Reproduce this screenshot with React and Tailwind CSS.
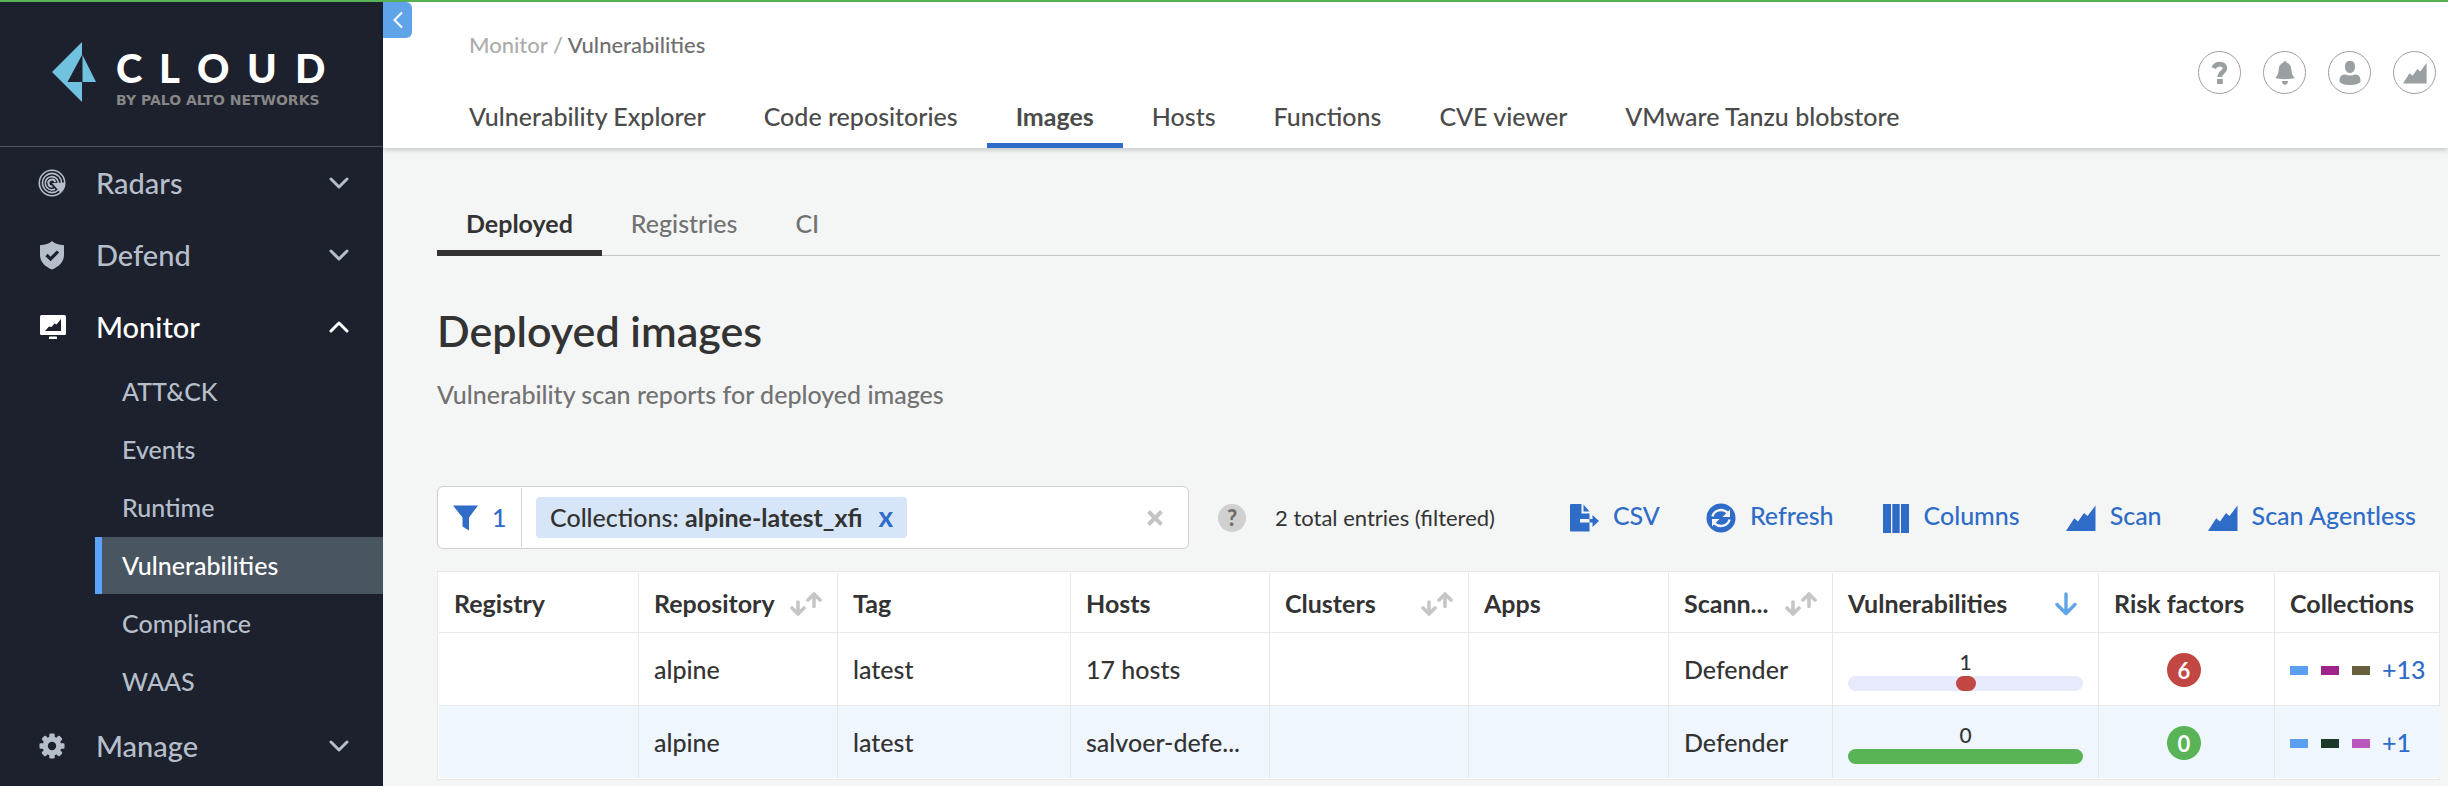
import React from "react";

function Chevron({ up = false }) {
  return (
    <svg width="20" height="14" viewBox="0 0 20 14" fill="none" stroke="currentColor" strokeWidth="3" strokeLinecap="round" strokeLinejoin="round" aria-hidden="true">
      <path d={up ? "M2 11 L10 3 L18 11" : "M2 3 L10 11 L18 3"} />
    </svg>
  );
}

function RadarIcon() {
  return (
    <svg width="28" height="28" viewBox="0 0 28 28" fill="none" stroke="currentColor" strokeWidth="1.6" aria-hidden="true">
      <circle cx="14" cy="14" r="12.7" />
      <circle cx="14" cy="14" r="9.6" />
      <path d="M20.4 14.5 A6.6 6.6 0 1 0 17 20" />
      <path d="M17.2 13 A3.5 3.5 0 1 0 14.5 17.5" strokeWidth="2" />
      <path d="M14 14 L27 13.4 A13 13 0 0 1 22.5 23.8 Z" fill="currentColor" stroke="none" />
    </svg>
  );
}

function ShieldIcon() {
  return (
    <svg width="28" height="30" viewBox="0 0 28 30" aria-hidden="true">
      <path d="M14 1 C16.5 3.4 21 5 26 5.2 V15 C26 22 20.5 27 14 29.4 C7.5 27 2 22 2 15 V5.2 C7 5 11.5 3.4 14 1 Z" fill="currentColor" />
      <path d="M8.5 15 L12.6 19 L20 11.5" fill="none" stroke="#1c212d" strokeWidth="3.2" />
    </svg>
  );
}

function MonitorIcon() {
  return (
    <svg width="28" height="28" viewBox="0 0 28 28" aria-hidden="true">
      <rect x="2" y="2" width="26" height="20" rx="1.5" fill="currentColor" />
      <path d="M7 18 L11 13.5 L13.5 14 L16.5 10.5 L18.5 11.5 L23 6 V18 Z" fill="#1c212d" />
      <rect x="11" y="23.5" width="8" height="2.5" rx="0.5" fill="currentColor" />
    </svg>
  );
}

function GearIcon() {
  return (
    <svg width="28" height="28" viewBox="0 0 28 28" fill="currentColor" aria-hidden="true">
      {[0, 45, 90, 135].map((a) => (
        <rect key={a} x="11.3" y="1.5" width="5.4" height="25" rx="1.2" transform={`rotate(${a} 14 14)`} />
      ))}
      <circle cx="14" cy="14" r="9.4" />
      <circle cx="14" cy="14" r="4.2" fill="#1c212d" />
    </svg>
  );
}

function ScanIcon({ size = 30 }) {
  return (
    <svg width={size} height={size} viewBox="0 0 30 30" fill="currentColor" aria-hidden="true">
      <path d="M0 28 L8.2 15.2 L12 18.5 L18 10 L21.5 13 L29.5 2.5 V28 Z" />
    </svg>
  );
}

function CsvIcon() {
  return (
    <svg width="30" height="30" viewBox="0 0 30 30" fill="currentColor" aria-hidden="true">
      <path d="M2 1 H12.5 V10.5 H20.5 V16 H11 V19.5 H20.5 V28.5 H2 Q1 28.5 1 27.5 V2 Q1 1 2 1 Z" />
      <path d="M14.5 1.5 L20.5 8.5 H14.5 Z" />
      <path d="M20.5 16 H23.5 V12 L30 18 L23.5 24 V19.5 H20.5 Z" />
    </svg>
  );
}

function RefreshIcon() {
  return (
    <svg width="30" height="30" viewBox="0 0 30 30" aria-hidden="true">
      <circle cx="15" cy="15" r="14.5" fill="currentColor" />
      <g fill="none" stroke="#f4f6f5" strokeWidth="2.4">
        <path d="M6.5 13.5 C8 7 16 5 21.5 9.5" />
        <path d="M23.5 16.5 C22 23 14 25 8.5 20.5" />
      </g>
      <path d="M24 6.5 V14 H16.5 Z M6 23.5 V16 H13.5 Z" fill="#f4f6f5" />
    </svg>
  );
}

function ColumnsIcon() {
  return (
    <svg width="30" height="30" viewBox="0 0 30 30" fill="currentColor" aria-hidden="true">
      <rect x="3" y="1" width="8" height="29" />
      <rect x="12.3" y="1" width="7.4" height="29" />
      <rect x="21" y="1" width="8" height="29" />
    </svg>
  );
}

function SortIcon() {
  return (
    <svg width="32" height="24" viewBox="0 0 32 24" fill="none" stroke="#c6c6c6" strokeWidth="3.6" strokeLinecap="round" strokeLinejoin="round" aria-hidden="true">
      <path d="M8 10 V21 M2 16 L8 22 L14 16" />
      <path d="M24 14.5 V3 M18 8 L24 2 L30 8" />
    </svg>
  );
}

function SortedIcon() {
  return (
    <svg width="22" height="24" viewBox="0 0 22 24" fill="none" stroke="#5fa3e8" strokeWidth="3.4" strokeLinecap="round" strokeLinejoin="round" aria-hidden="true">
      <path d="M11 2 V21 M2 12.5 L11 21.5 L20 12.5" />
    </svg>
  );
}

const sections = [
  { label: "Radars", icon: <RadarIcon /> },
  { label: "Defend", icon: <ShieldIcon /> },
  {
    label: "Monitor",
    icon: <MonitorIcon />,
    open: true,
    items: ["ATT&CK", "Events", "Runtime", "Vulnerabilities", "Compliance", "WAAS"],
  },
  { label: "Manage", icon: <GearIcon /> },
];

function Logo() {
  return (
    <svg width="290" height="72" viewBox="0 0 290 72" role="img" aria-label="Cloud by Palo Alto Networks">
      <path d="M30 0 V13 L15.5 40 H30 V60 L0 30 Z" fill="#70c2de" />
      <path d="M30.5 13 L44 40 H30.5 Z" fill="#70c2de" />
      <text x="64 107 145 195 243" y="41" fill="#ffffff" fontSize="40" fontWeight="900" fontFamily="Lato, sans-serif">CLOUD</text>
      <text x="64" y="63" fill="#868686" fontSize="14" fontWeight="700" fontFamily="'DejaVu Sans', sans-serif">BY PALO ALTO NETWORKS</text>
    </svg>
  );
}

function Sidebar() {
  return (
    <aside className="w-[383px] shrink-0 bg-[#1c212d] text-[#b6becb]">
      <div className="h-[145px] border-b border-[#50545f] pl-[52px] pt-10">
        <Logo />
      </div>
      <nav aria-label="Main">
        {sections.map((s) => (
          <div key={s.label}>
            <button
              type="button"
              aria-expanded={!!s.open}
              className={`flex h-[72px] w-full items-center pl-[38px] pr-[34px] text-left text-[29px] ${s.open ? "text-white" : ""}`}
            >
              <span className="flex w-[58px]">{s.icon}</span>
              <span className="flex-1">{s.label}</span>
              <Chevron up={s.open} />
            </button>
            {s.items && (
              <ul className="flex flex-col gap-px pl-[95px]">
                {s.items.map((i) => (
                  <li key={i}>
                    <a
                      href="#"
                      className={`flex h-[57px] items-center border-l-[7px] pl-5 text-[25px] ${
                        i === "Vulnerabilities" ? "border-[#5ba3fb] bg-[#4a5562] text-white" : "border-transparent"
                      }`}
                    >
                      {i}
                    </a>
                  </li>
                ))}
              </ul>
            )}
          </div>
        ))}
      </nav>
    </aside>
  );
}

const tabs = ["Vulnerability Explorer", "Code repositories", "Images", "Hosts", "Functions", "CVE viewer", "VMware Tanzu blobstore"];

function RoundButton({ label, children }) {
  return (
    <button type="button" aria-label={label} className="flex size-[43px] items-center justify-center rounded-full border border-[#9aa0a3] text-[#9a9fa2]">
      {children}
    </button>
  );
}

function Header() {
  return (
    <header className="relative z-10 flex h-[146px] items-start justify-between bg-white shadow-[0_2px_5px_rgba(0,0,0,0.2)]">
      <button type="button" aria-label="Collapse menu" className="absolute left-0 top-0 flex h-9 w-[29px] items-center justify-center rounded-r-md bg-[#5fa3e8]">
        <svg width="10" height="18" viewBox="0 0 10 18" fill="none" stroke="#ffffff" strokeWidth="2" aria-hidden="true">
          <path d="M9 1.5 L1.5 9 L9 16.5" />
        </svg>
      </button>
      <div className="flex h-full flex-col justify-between pl-[57px] pt-[29px]">
        <p className="pl-[29px] text-[22px] leading-7 text-[#6f6f6f]">
          <a href="#" className="text-[#acacac]">Monitor</a>
          <span className="text-[#acacac]"> / </span>
          Vulnerabilities
        </p>
        <nav aria-label="Sections" className="flex text-[25px] leading-8 text-[#4b4b4b]">
          {tabs.map((t) => (
            <a
              key={t}
              href="#"
              className={`border-b-[5px] px-[29px] pb-[11px] ${t === "Images" ? "border-[#2f6cc8] font-bold" : "border-transparent"}`}
            >
              {t}
            </a>
          ))}
        </nav>
      </div>
      <div className="flex gap-[22px] pr-3 pt-[49px]">
        <RoundButton label="Help">
          <svg width="18" height="24" viewBox="0 0 18 24" aria-hidden="true">
            <path d="M2.5 7 C5 1.8 14 1.8 14 7.2 C14 11 8.8 11 8.8 16" fill="none" stroke="currentColor" strokeWidth="4.6" />
            <rect x="6" y="18" width="5.8" height="5" fill="currentColor" />
          </svg>
        </RoundButton>
        <RoundButton label="Notifications">
          <svg width="20" height="24" viewBox="0 0 20 24" fill="currentColor" aria-hidden="true">
            <path d="M10 0 C11 0 11.6 0.8 11.7 1.8 C15 2.8 16.2 5.5 16.4 9 C16.6 12.5 17.5 14.5 19.8 17 C14 18.5 6 18.5 0.2 17 C2.5 14.5 3.4 12.5 3.6 9 C3.8 5.5 5 2.8 8.3 1.8 C8.4 0.8 9 0 10 0 Z" />
            <path d="M7 20 H13 C13 22.3 11.8 23.8 10 23.8 C8.2 23.8 7 22.3 7 20 Z" />
          </svg>
        </RoundButton>
        <RoundButton label="Account">
          <svg width="22" height="24" viewBox="0 0 22 24" fill="currentColor" aria-hidden="true">
            <path d="M11 0 C14.5 0 16 2 16 5.5 C16 9.5 14 12 11 12 C8 12 6 9.5 6 5.5 C6 2 7.5 0 11 0 Z" />
            <path d="M6 13.5 C9 14.8 13 14.8 16 13.5 C20 13.5 21.5 16 21.5 20 C21.5 22.5 16 24 11 24 C6 24 0.5 22.5 0.5 20 C0.5 16 2 13.5 6 13.5 Z" />
          </svg>
        </RoundButton>
        <RoundButton label="Reports">
          <ScanIcon size={24} />
        </RoundButton>
      </div>
    </header>
  );
}

const actions = [
  { label: "CSV", icon: <CsvIcon /> },
  { label: "Refresh", icon: <RefreshIcon /> },
  { label: "Columns", icon: <ColumnsIcon /> },
  { label: "Scan", icon: <ScanIcon /> },
  { label: "Scan Agentless", icon: <ScanIcon /> },
];

function Toolbar() {
  return (
    <div className="flex items-center">
      <div className="flex h-[63px] max-w-[752px] flex-1 items-center rounded-md border border-[#cfcfcf] bg-white">
        <button type="button" aria-label="Filters, 1 active" className="flex h-[59px] w-[84px] items-center gap-[14px] border-r border-[#d4d4d4] pl-[15px] text-[25px] text-[#2f6cc8]">
          <svg width="25" height="26" viewBox="0 0 25 26" fill="currentColor" aria-hidden="true">
            <path d="M0 0.5 H25 L16 12.5 V25.5 L9.5 21.5 V12.5 Z" />
          </svg>
          1
        </button>
        <span className="ml-[14px] flex h-[41px] items-center whitespace-pre rounded-sm bg-[#d6e6f8] px-[14px] text-[25px] text-[#333333]">
          Collections: <b>alpine-latest_xfi</b>
          <button type="button" aria-label="Remove filter" className="ml-4 pb-1 text-[28px] font-bold text-[#2f6cc8]">x</button>
        </span>
        <input type="text" aria-label="Filter images" className="h-full min-w-0 flex-1 bg-transparent px-3 text-[25px] outline-none" />
        <button type="button" aria-label="Clear filters" className="mr-[25px] text-[#c4c4c4]">
          <svg width="16" height="16" viewBox="0 0 16 16" stroke="currentColor" strokeWidth="4" aria-hidden="true">
            <path d="M1.5 1.5 L14.5 14.5 M14.5 1.5 L1.5 14.5" />
          </svg>
        </button>
      </div>
      <button type="button" aria-label="Filter help" className="ml-[29px] flex size-7 items-center justify-center rounded-full bg-[#d0d0d0] text-[22px] font-black text-[#707070]">?</button>
      <p className="ml-[29px] text-[22px] font-normal text-[#333333]">2 total entries (filtered)</p>
      <div className="ml-auto flex gap-[46px] pr-6 text-[25px] text-[#2f6cc8]">
        {actions.map((a) => (
          <button key={a.label} type="button" className="flex items-center gap-[14px]">
            {a.icon}
            <span className="pb-1">{a.label}</span>
          </button>
        ))}
      </div>
    </div>
  );
}

const columns = [
  { label: "Registry", width: "w-[200px]" },
  { label: "Repository", width: "w-[199px]", sort: true },
  { label: "Tag", width: "w-[233px]" },
  { label: "Hosts", width: "w-[199px]" },
  { label: "Clusters", width: "w-[199px]", sort: true },
  { label: "Apps", width: "w-[200px]" },
  { label: "Scann...", width: "w-[164px]", sort: true },
  { label: "Vulnerabilities", width: "w-[266px]", sorted: true },
  { label: "Risk factors", width: "w-[176px]" },
  { label: "Collections", width: "w-[165px]" },
];

const rows = [
  {
    hosts: "17 hosts",
    count: 1,
    risk: 6,
    riskColor: "bg-[#c24641]",
    track: "bg-[#e7eafb]",
    swatches: ["bg-[#5b9ff0]", "bg-[#a0228b]", "bg-[#66603f]"],
    more: "+13",
  },
  {
    hosts: "salvoer-defe...",
    count: 0,
    risk: 0,
    riskColor: "bg-[#58b457]",
    track: "bg-[#58b457]",
    swatches: ["bg-[#5b9ff0]", "bg-[#1d3a29]", "bg-[#ba57bc]"],
    more: "+1",
  },
];

const cell = "whitespace-nowrap border-r border-[#e8e8e8] px-[15px] pt-[2px] last:border-r-0";

function ImagesTable() {
  return (
    <div className="border border-[#e8e8e8] bg-white p-px">
      <table className="w-full table-fixed border-separate border-spacing-0 text-[25px] text-[#333333]">
        <thead>
          <tr className="h-[60px]">
            {columns.map((c) => (
              <th key={c.label} scope="col" className={`${c.width} whitespace-nowrap border-b border-r border-[#e8e8e8] px-[15px] pt-[2px] text-left font-bold last:border-r-0`}>
                <span className="flex items-center justify-between">
                  <span>{c.label}</span>
                  {c.sort && (
                    <button type="button" aria-label="Sort">
                      <SortIcon />
                    </button>
                  )}
                  {c.sorted && (
                    <button type="button" aria-label="Sorted descending" className="pr-[6px]">
                      <SortedIcon />
                    </button>
                  )}
                </span>
              </th>
            ))}
          </tr>
        </thead>
        <tbody>
          {rows.map((r, n) => (
            <tr key={n} className="h-[73px] even:h-[72px] even:bg-[#eff6fe] odd:*:border-b">
              <td className={cell}></td>
              <td className={cell}>alpine</td>
              <td className={cell}>latest</td>
              <td className={cell}>{r.hosts}</td>
              <td className={cell}></td>
              <td className={cell}></td>
              <td className={cell}>Defender</td>
              <td className={cell}>
                <div className="flex flex-col items-center gap-1 pt-[2px]">
                  <span className="text-[21px] leading-5">{r.count}</span>
                  <span className={`flex h-[15px] w-full justify-center rounded-full ${r.track}`}>
                    {r.count > 0 && <span className="w-5 rounded-full bg-[#c24641]" />}
                  </span>
                </div>
              </td>
              <td className={`${cell} pr-5`}>
                <span className={`mx-auto flex size-[34px] items-center justify-center rounded-full text-[22px] font-bold text-white ${r.riskColor}`}>{r.risk}</span>
              </td>
              <td className={cell}>
                <span className="flex items-center">
                  <span className="flex gap-[13px] pr-3">
                    {r.swatches.map((s) => (
                      <span key={s} className={`h-[9px] w-[18px] shrink-0 ${s}`} />
                    ))}
                  </span>
                  <a href="#" className="text-[#2f6cc8]">{r.more}</a>
                </span>
              </td>
            </tr>
          ))}
        </tbody>
      </table>
    </div>
  );
}

export default function App() {
  return (
    <div className="flex min-h-screen flex-col border-t-2 border-[#58b457] bg-[#f4f6f5] font-[Lato,sans-serif] font-medium">
      <div className="flex flex-1">
        <Sidebar />
        <div className="min-w-0 flex-1">
          <Header />
          <main className="pl-[54px] pr-2 pt-[59px]">
            <nav aria-label="Image sources" className="flex border-b border-[#c3c6c5] text-[25px] leading-8 text-[#727272]">
              <a href="#" className="-mb-px border-b-[6px] border-[#333333] px-[29px] pb-[11px] font-bold text-[#333333]">Deployed</a>
              <a href="#" className="px-[29px]">Registries</a>
              <a href="#" className="px-[29px]">CI</a>
            </nav>
            <h1 className="mt-[49px] text-[43px] font-semibold leading-[52px] text-[#333333]">Deployed images</h1>
            <p className="mt-[21px] text-[25px] leading-8 text-[#727272]">Vulnerability scan reports for deployed images</p>
            <div className="mt-[76px]">
              <Toolbar />
            </div>
            <div className="mt-[22px]">
              <ImagesTable />
            </div>
          </main>
        </div>
      </div>
    </div>
  );
}
